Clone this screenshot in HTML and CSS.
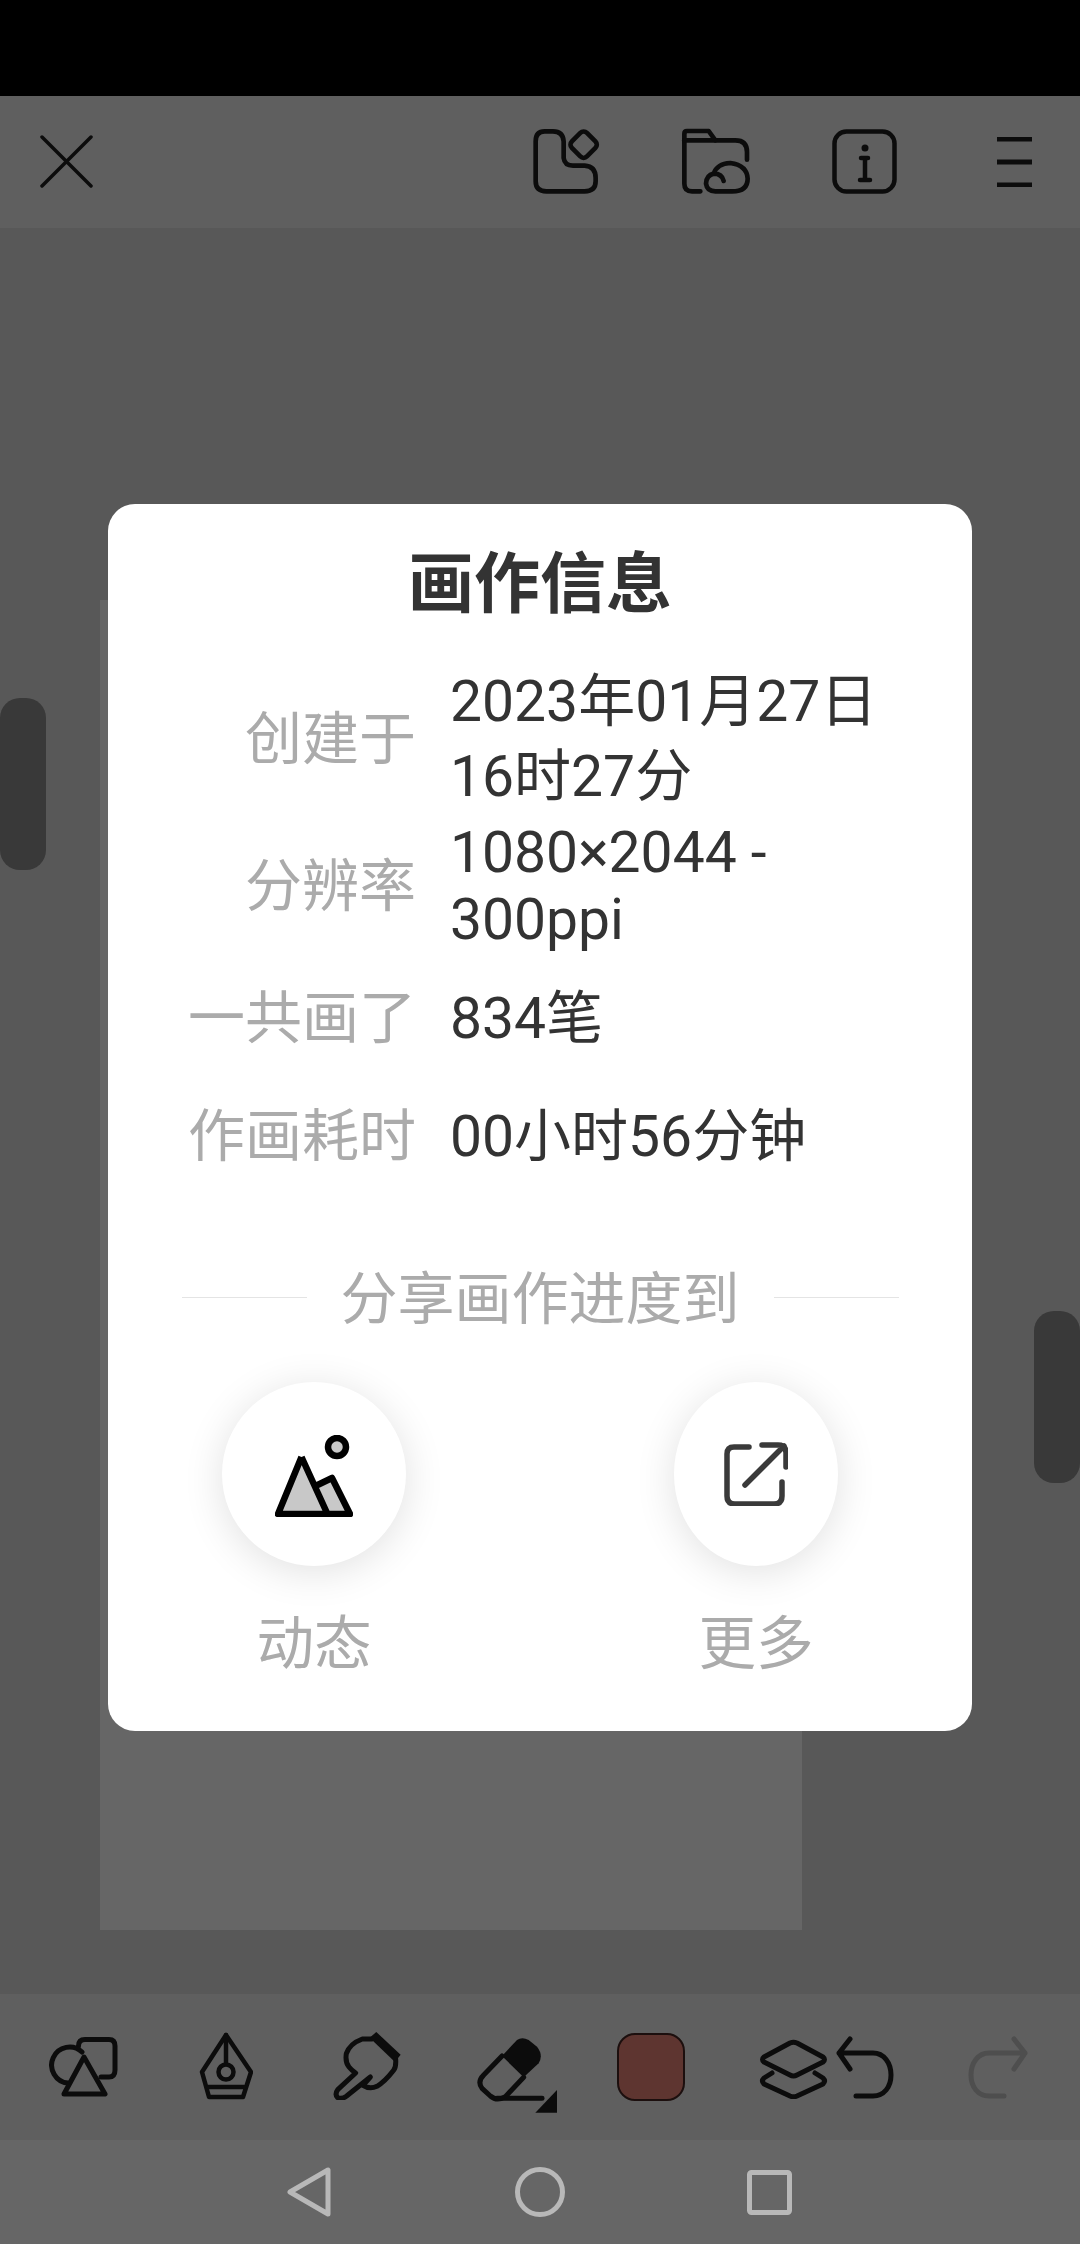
FILE: index.html
```html
<!DOCTYPE html>
<html lang="zh-CN">
<head>
    <meta charset="UTF-8">
    <meta name="viewport" content="width=device-width, initial-scale=1.0">
    <title>画作信息</title>
    <link rel="stylesheet" href="styles.css">
</head>
<body>
    <div class="status-bar"></div>

    <div class="top-bar">
        <svg class="icon icon-close" viewBox="0 0 53 53"><path d="M2 2 51 51M51 2 2 51"/></svg>
        <svg class="icon icon-shape" viewBox="70 55 205 198"><path d="M105 65H130Q160 65 162 95V145Q165 168 190 168H225Q258 170 258 205V215Q258 245 225 245H110Q78 245 78 215V95Q78 65 105 65Z"/><rect x="190" y="73" width="64" height="64" rx="14" transform="rotate(45 222 105)"/></svg>
        <svg class="icon icon-folder" viewBox="512 50 212 205"><path d="M570 243H545Q522 243 522 220V70Q522 62 530 62H595L615 90H675Q710 90 710 125V148"/><path d="M522 90H615"/><path d="M610 190Q620 160 660 158Q710 165 712 205Q712 243 665 243H615Q590 243 587 220Q588 195 610 190Q635 190 640 212"/></svg>
        <svg class="icon icon-info" viewBox="0 0 65 65"><rect x="2.5" y="2.5" width="60" height="60" rx="12"/><path d="M29 29H36M33 29V51M28 51H38"/><circle class="dot" cx="33" cy="19" r="3.5"/></svg>
        <svg class="icon icon-menu" viewBox="0 0 35 50"><path d="M0 2H35M0 25H35M0 48H35"/></svg>
    </div>

    <div class="canvas-area">
        <div class="paper"></div>
        <div class="handle handle-left"></div>
        <div class="handle handle-right"></div>
    </div>

    <div class="tool-bar">
        <svg class="icon icon-shapes" viewBox="0 0 69 62"><path d="M29.5 10Q29.5 3.5 36 3.5H60Q66 3.5 66 10V34Q66 41 60 41H52"/><path d="M33 16A18 18 0 1 0 19 47"/><path d="M35 21 56 58H15Z"/></svg>
        <svg class="icon icon-pen" viewBox="0 0 54 68"><path d="M27 3 52 40 44 65H10L3 40Z"/><path d="M9 55H45M27 3V31"/><circle cx="27" cy="40" r="7.5"/></svg>
        <svg class="icon icon-finger" viewBox="40 35 205 205"><path d="M158 56H128Q90 70 80 100Q76 125 88 140Q96 150 108 158L55 207Q44 222 54 232Q66 238 80 228L152 170L130 195Q150 208 172 198Q195 185 222 150Q230 140 228 115"/><path class="solid" d="M150 52 170 35 243 103 226 125Z"/></svg>
        <svg class="icon icon-eraser" viewBox="470 45 245 235"><path d="M545 108 490 165Q470 185 485 205L510 228Q530 245 555 230L610 172"/><path class="solid" d="M545 108 590 60Q605 50 625 60L650 80Q670 105 655 130L610 172Z"/><path d="M530 235H665"/><path class="solid" d="M710 210V278H645Z"/></svg>
        <div class="color-swatch"></div>
        <svg class="icon icon-layers" viewBox="0 0 69 60"><path d="M31 4Q34.500 2.500 38 4L64 18Q67 20.500 64 23L38 36Q34.500 38 31 36L5 23Q2 20.500 5 18Z"/><path d="M13 34 5 39Q2 42 5 45L31 57Q34.500 58.500 38 57L64 45Q67 42 64 39L56 34"/></svg>
        <svg class="icon icon-undo" viewBox="0 0 58 64"><path d="M14 3 3 17 14 33M3 17H37C48 17 55 27 55 39C55 51 48 60 37 60H20"/></svg>
        <svg class="icon icon-redo" viewBox="0 0 60 64"><path d="M46 3 57 17 46 33M57 17H21C10 17 3 27 3 39C3 51 10 60 21 60H36"/></svg>
    </div>

    <div class="nav-bar">
        <svg class="icon-nav nav-back" viewBox="0 0 44 50"><path d="M41 3V47L3 25Z"/></svg>
        <svg class="icon-nav nav-home" viewBox="0 0 50 50"><circle cx="25" cy="25" r="22.500"/></svg>
        <svg class="icon-nav nav-recent" viewBox="0 0 45 45"><rect x="2.500" y="2.500" width="40" height="40" rx="2"/></svg>
    </div>

    <div class="dialog">
        <h2 class="dialog-title">画作信息</h2>

        <div class="info-row row-date">
            <span class="info-label">创建于</span>
            <span class="info-value">2023年01月27日<br>16时27分</span>
        </div>
        <div class="info-row row-size">
            <span class="info-label">分辨率</span>
            <span class="info-value">1080×2044 -<br>300ppi</span>
        </div>
        <div class="info-row row-count">
            <span class="info-label">一共画了</span>
            <span class="info-value">834笔</span>
        </div>
        <div class="info-row row-time">
            <span class="info-label">作画耗时</span>
            <span class="info-value">00小时56分钟</span>
        </div>

        <div class="share-title">
            <span class="share-line"></span>
            <span>分享画作进度到</span>
            <span class="share-line"></span>
        </div>

        <div class="share-list">
            <div class="share-item">
                <div class="share-btn btn-moments">
                    <svg class="share-icon icon-mountain" viewBox="0 0 78 82"><path class="fill-grey" d="M26.500 22 54 79H3Z"/><path class="fill-grey" d="M57 43 75 79H54L42.500 48Z"/><path d="M26.500 22 3 79H75L57 43 42.500 50M26.500 22 52 78"/><circle class="fill-sun" cx="62" cy="12" r="9"/></svg>
                </div>
                <span class="share-name">动态</span>
            </div>
            <div class="share-item">
                <div class="share-btn btn-more">
                    <svg class="share-icon icon-external" viewBox="0 0 64 64"><path d="M25 5H10Q3 5 3 12V54Q3 62 11 62H50Q58 62 58 54V40M38 3H54Q62 3 62 11V25M60 4 21 43"/></svg>
                </div>
                <span class="share-name">更多</span>
            </div>
        </div>
    </div>
</body>
</html>
```

FILE: styles.css
```css
body {
    margin: 0;
    width: 1080px;
    height: 2244px;
    overflow: hidden;
    display: flex;
    flex-direction: column;
    background-color: #585858;
    font-family: Roboto, "Noto Sans CJK SC", sans-serif;
}

.icon {
    display: block;
    flex: none;
    fill: none;
    stroke: #0c0c0c;
    stroke-width: 5;
    stroke-linecap: round;
    stroke-linejoin: round;
}

.icon .solid,
.icon .dot {
    fill: #0c0c0c;
    stroke: none;
}

.status-bar {
    height: 96px;
    background-color: #000;
}

/* top bar */
.top-bar {
    height: 132px;
    display: flex;
    align-items: center;
    background-color: #5f5f5f;
}

.icon-close {
    width: 53px;
    height: 53px;
    margin-left: 40px;
    margin-top: -1px;
    stroke-width: 3.5;
}

.icon-shape {
    width: 68.3px;
    height: 66px;
    margin-left: 440.3px;
    margin-top: -1.4px;
    stroke-width: 14;
}

.icon-folder {
    width: 70.7px;
    height: 68.3px;
    margin-left: 79.1px;
    margin-top: -2.3px;
    stroke-width: 14;
}

.icon-info {
    width: 65px;
    height: 65px;
    margin-left: 80.6px;
    margin-top: -1px;
    stroke-width: 4.5;
}

.icon-menu {
    width: 35px;
    height: 50px;
    margin-left: 100px;
    margin-top: -1px;
}

/* canvas */
.canvas-area {
    flex: 1;
    position: relative;
}

.paper {
    position: absolute;
    left: 100px;
    top: 372px;
    width: 702px;
    height: 1330px;
    background-color: #666;
}

.handle {
    position: absolute;
    width: 46px;
    height: 172px;
    background-color: #393939;
    border-radius: 20px;
}

.handle-left {
    left: 0;
    top: 470px;
}

.handle-right {
    right: 0;
    top: 1083px;
}

/* bottom tools */
.tool-bar {
    height: 146px;
    display: flex;
    align-items: center;
    background-color: #5f5f5f;
}

.icon-shapes {
    width: 69px;
    height: 62px;
    margin-left: 49px;
}

.icon-pen {
    width: 54px;
    height: 68px;
    margin-left: 81px;
    margin-top: -2px;
    stroke-width: 4.5;
}

.icon-finger {
    width: 68.3px;
    height: 68.3px;
    margin-left: 80.3px;
    margin-top: -2px;
    stroke-width: 15;
}

.icon-eraser {
    width: 81.7px;
    height: 78.3px;
    margin-left: 75.1px;
    margin-top: 14px;
    stroke-width: 15;
}

.color-swatch {
    flex: none;
    box-sizing: border-box;
    width: 68px;
    height: 68px;
    margin-left: 58.6px;
    background-color: #5e3530;
    border: 2px solid #1c0f0e;
    border-radius: 18px;
}

.icon-layers {
    width: 69px;
    height: 60px;
    margin-left: 74px;
    margin-top: 4px;
}

.icon-undo {
    width: 58px;
    height: 64px;
    margin-left: 8px;
    margin-top: 2px;
}

.icon-redo {
    width: 60px;
    height: 64px;
    margin-left: 74px;
    margin-top: 2px;
    stroke: #4e4e4e;
}

/* system nav */
.nav-bar {
    height: 104px;
    display: flex;
    align-items: center;
    background-color: #666;
}

.icon-nav {
    display: block;
    flex: none;
    fill: none;
    stroke: #b8b8b8;
    stroke-width: 5;
    stroke-linejoin: round;
}

.nav-back {
    width: 44px;
    height: 50px;
    margin-left: 287px;
}

.nav-home {
    width: 50px;
    height: 50px;
    margin-left: 184px;
}

.nav-recent {
    width: 45px;
    height: 45px;
    margin-left: 182px;
}

/* dialog */
.dialog {
    position: absolute;
    left: 108px;
    top: 504px;
    box-sizing: border-box;
    width: 864px;
    height: 1227px;
    padding-top: 35px;
    background-color: #fff;
    border-radius: 27px;
    color: #333;
}

.dialog-title {
    margin: 0 0 33px;
    font-size: 66px;
    line-height: 92px;
    font-weight: bold;
    text-align: center;
}

.info-row {
    display: flex;
    align-items: center;
    font-size: 57px;
    line-height: 67px;
}

.info-label {
    flex: none;
    width: 308px;
    margin-right: 34px;
    text-align: right;
    color: #ababab;
}

.row-date .info-value {
    line-height: 75px;
}

.row-size {
    margin-top: 5px;
}

.row-count {
    height: 118px;
    margin-top: 6px;
}

.row-time {
    height: 118px;
}

.share-title {
    display: flex;
    align-items: center;
    justify-content: center;
    gap: 34px;
    margin-top: 62px;
    font-size: 57px;
    line-height: 86px;
    color: #ababab;
}

.share-line {
    width: 125px;
    height: 1px;
    margin-bottom: 6px;
    background-color: #e4e4e4;
}

.share-list {
    display: flex;
    margin-top: 39px;
}

.share-item {
    width: 184px;
    display: flex;
    flex-direction: column;
    align-items: center;
}

.share-item:first-child {
    margin-left: 114px;
}

.share-item:last-child {
    margin-left: 258px;
}

.share-btn {
    height: 184px;
    display: flex;
    align-items: center;
    justify-content: center;
    border-radius: 50%;
    background-color: #fff;
    box-shadow: 0 6px 40px rgba(0, 0, 0, 0.12);
}

.btn-moments {
    width: 184px;
}

.btn-more {
    width: 164px;
}

.share-icon {
    width: 78px;
    height: 82px;
    fill: none;
    stroke: #000;
    stroke-width: 6.5;
    stroke-linejoin: round;
}

.share-icon .fill-grey {
    fill: #c8c8c8;
    stroke: none;
}

.share-icon .fill-sun {
    fill: #c8c8c8;
}

.icon-mountain {
    margin-top: 4px;
}

.icon-external {
    width: 64px;
    height: 64px;
    stroke: #3a3a3a;
    stroke-width: 5.5;
    stroke-linecap: round;
}

.share-name {
    margin-top: 39px;
    font-size: 57.6px;
    line-height: 80px;
    color: #ababab;
}
```
